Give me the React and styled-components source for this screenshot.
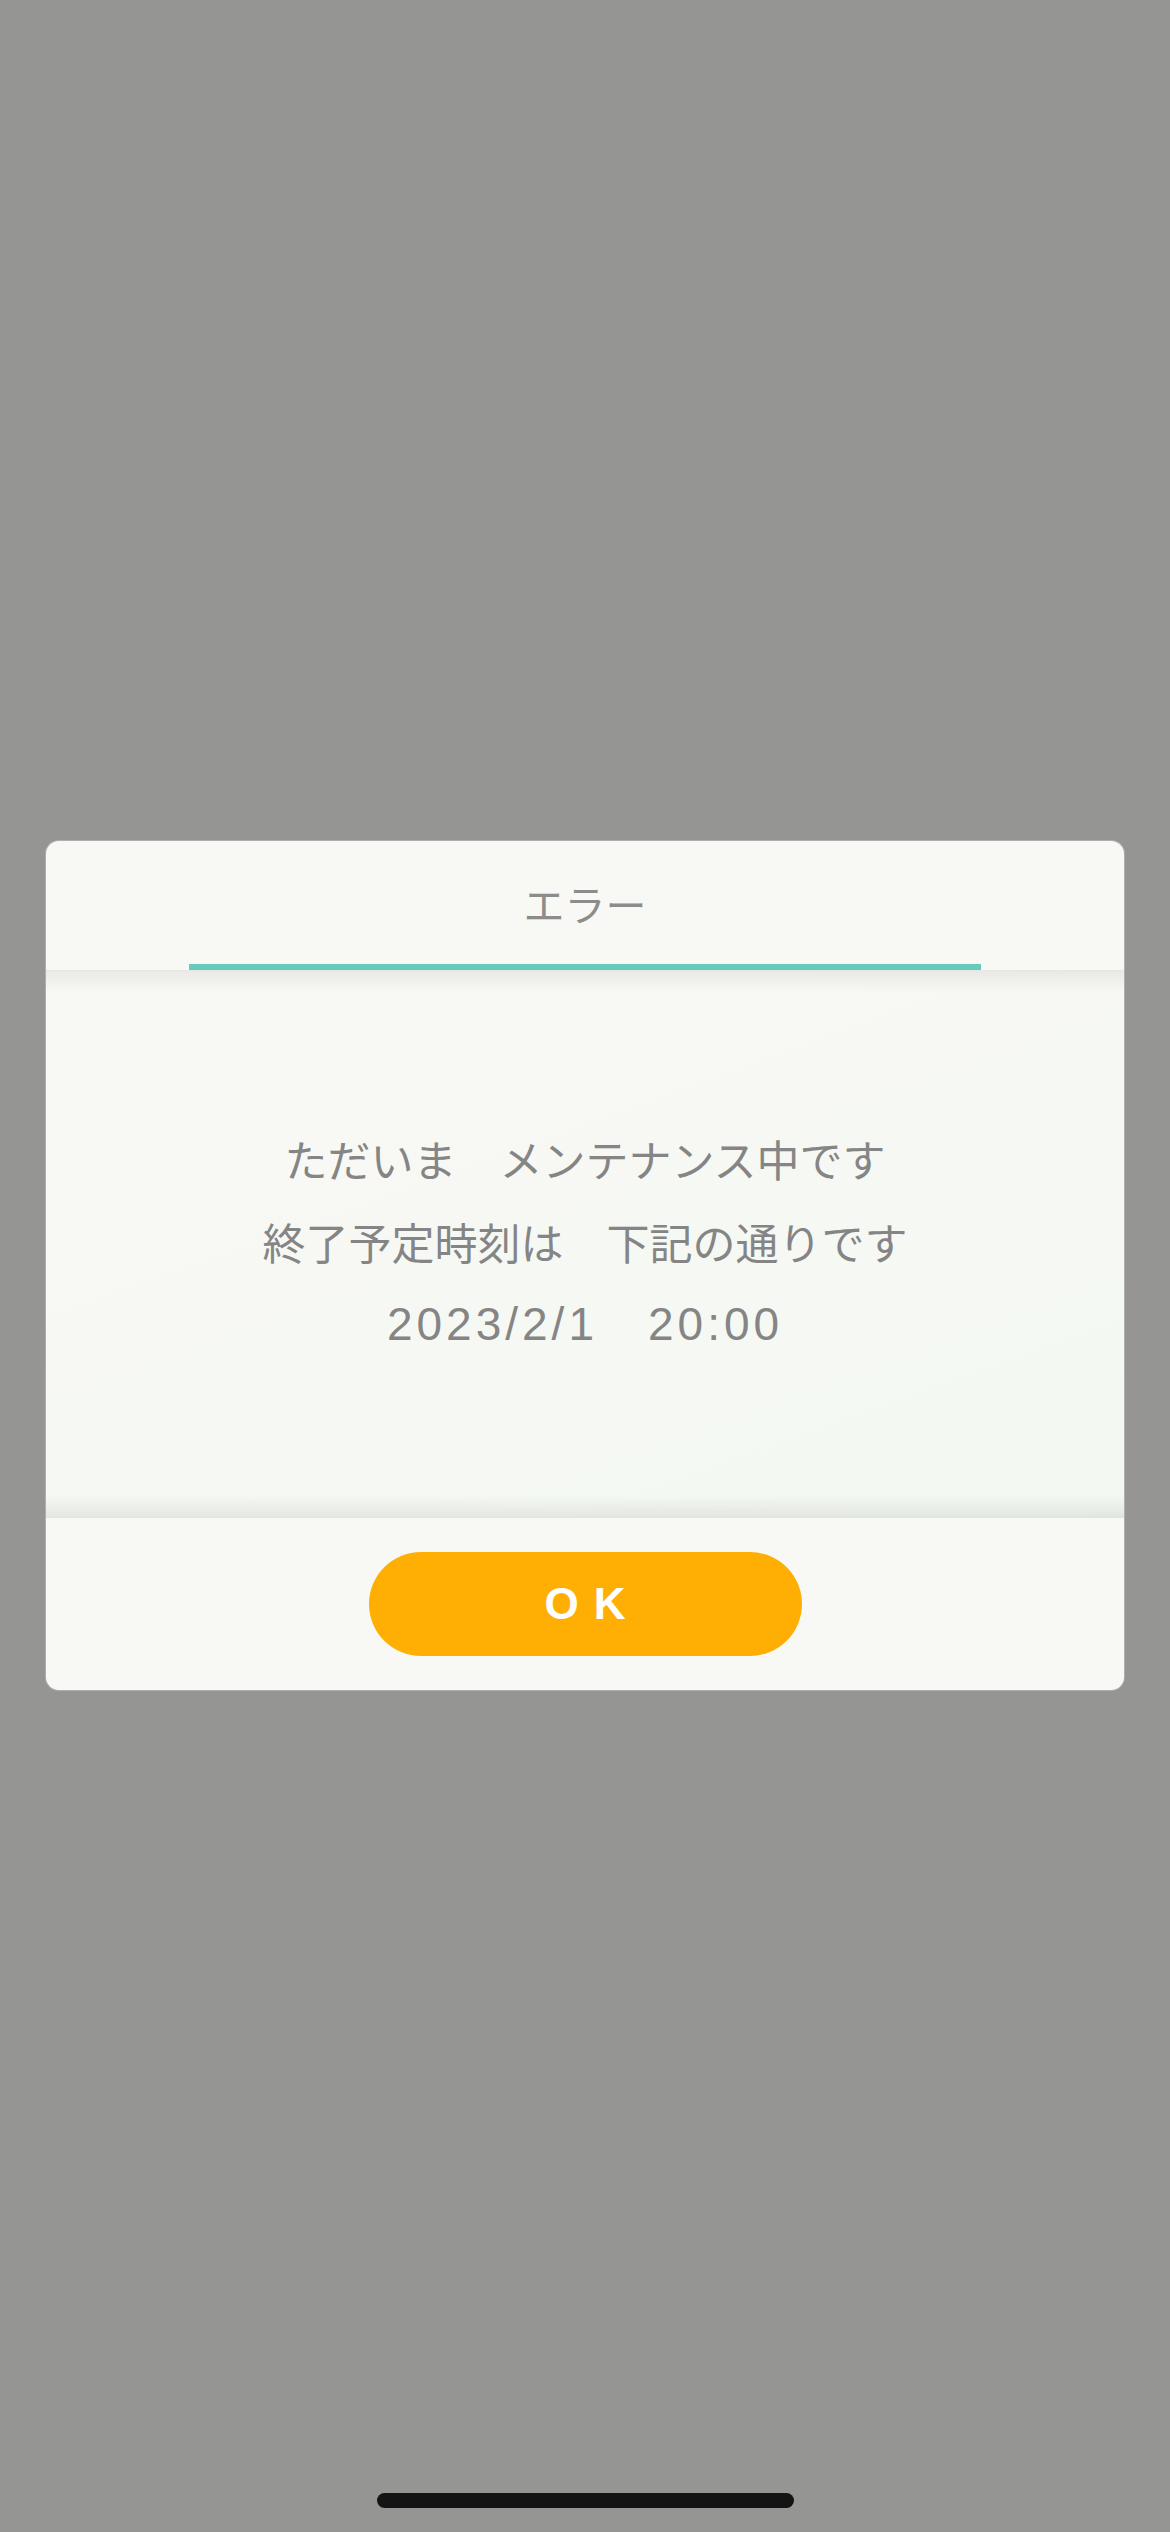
import React from "react";
import styled, { createGlobalStyle } from "styled-components";

const GlobalStyle = createGlobalStyle`
  html, body {
    margin: 0;
    padding: 0;
    background: #959594;
  }
  body {
    font-family: "Liberation Sans", "Noto Sans CJK JP", sans-serif;
  }
`;

const Screen = styled.div`
  width: 1170px;
  height: 2532px;
  background: #959594;
  display: flex;
  flex-direction: column;
  align-items: center;
  position: relative;
  overflow: hidden;
`;

const Overlay = styled.div`
  flex: 1;
  width: 100%;
  display: flex;
  align-items: flex-start;
  justify-content: center;
  padding-top: 841px;
  box-sizing: border-box;
`;

const Dialog = styled.div`
  width: 1078px;
  height: 849px;
  background: #f8f8f4;
  border-radius: 13px;
  box-shadow: 0 0 0 1px rgba(255, 255, 255, 0.25);
  display: flex;
  flex-direction: column;
  overflow: hidden;
`;

const Header = styled.div`
  height: 130px;
  display: flex;
  flex-direction: column;
  align-items: center;
  justify-content: flex-end;
  border-bottom: 1px solid #e6e6e2;
  box-sizing: border-box;
`;

const Title = styled.div`
  font-family: "Noto Sans CJK JP", sans-serif;
  font-size: 41px;
  color: #8c8c8c;
  line-height: 1;
  margin-bottom: 40px;
`;

const Accent = styled.div`
  width: 792px;
  height: 6px;
  background: #66cbbd;
`;

const Body = styled.div`
  flex: 1;
  display: flex;
  flex-direction: column;
  align-items: center;
  justify-content: center;
  padding-bottom: 5px;
  background:
    linear-gradient(to bottom, rgba(0,0,0,0.06), rgba(0,0,0,0) 22px),
    linear-gradient(to top, rgba(0,0,0,0.07), rgba(0,0,0,0) 22px),
    linear-gradient(160deg, #f8f8f4 30%, #f3f8f3 100%);
`;

const Line = styled.div`
  line-height: 83px;
  color: #858585;
  white-space: pre;
  font-family: ${(p) => (p.$latin ? '"Liberation Sans", "Noto Sans CJK JP", sans-serif' : '"Noto Sans CJK JP", sans-serif')};
  font-size: ${(p) => (p.$latin ? "46px" : "43px")};
  letter-spacing: ${(p) => (p.$latin ? "4px" : "0")};
`;

const Footer = styled.div`
  height: 173px;
  border-top: 1px solid #e2e4e2;
  box-sizing: border-box;
  display: flex;
  align-items: center;
  justify-content: center;
`;

const OkButton = styled.button`
  width: 433px;
  height: 104px;
  border: none;
  border-radius: 52px;
  background: #ffaf04;
  color: #ffffff;
  font-family: "Liberation Sans", sans-serif;
  font-weight: 700;
  font-size: 44px;
  letter-spacing: 0.34em;
  padding: 0 0 0 0.34em;
  display: flex;
  align-items: center;
  justify-content: center;
`;

const HomeIndicator = styled.div`
  position: absolute;
  left: 377px;
  bottom: 24px;
  width: 417px;
  height: 15px;
  border-radius: 8px;
  background: #141414;
`;

export default function App() {
  return (
    <>
      <GlobalStyle />
      <Screen>
        <Overlay>
          <Dialog>
            <Header>
              <Title>エラー</Title>
              <Accent />
            </Header>
            <Body>
              <Line>ただいま　メンテナンス中です</Line>
              <Line>終了予定時刻は　下記の通りです</Line>
              <Line $latin>2023/2/1　20:00</Line>
            </Body>
            <Footer>
              <OkButton>OK</OkButton>
            </Footer>
          </Dialog>
        </Overlay>
        <HomeIndicator />
      </Screen>
    </>
  );
}
